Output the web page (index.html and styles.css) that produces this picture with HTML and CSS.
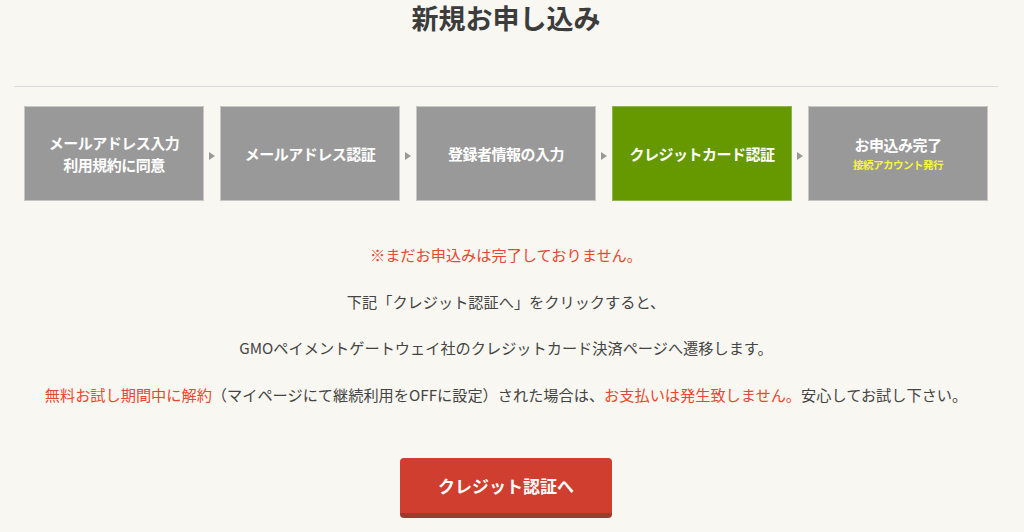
FILE: index.html
```html
<!DOCTYPE html>
<html lang="ja">
<head>
<meta charset="utf-8">
<title>新規お申し込み</title>
<link rel="stylesheet" href="styles.css">
</head>
<body>
<main class="page">
  <h1 class="title">新規お申し込み</h1>
  <div class="divider"></div>
  <ol class="steps">
    <li class="step">メールアドレス入力<br>利用規約に同意</li>
    <li class="arrow"></li>
    <li class="step">メールアドレス認証</li>
    <li class="arrow"></li>
    <li class="step">登録者情報の入力</li>
    <li class="arrow"></li>
    <li class="step current">クレジットカード認証</li>
    <li class="arrow"></li>
    <li class="step"><span>お申込み完了</span><span class="sub">接続アカウント発行</span></li>
  </ol>
  <div class="notes">
    <p class="red">※まだお申込みは完了しておりません。</p>
    <p>下記「クレジット認証へ」をクリックすると、</p>
    <p>GMOペイメントゲートウェイ社のクレジットカード決済ページへ遷移します。</p>
    <p><span class="red">無料お試し期間中に解約</span>（マイページにて継続利用をOFFに設定）された場合は、<span class="red">お支払いは発生致しません。</span>安心してお試し下さい。</p>
  </div>
  <div class="actions">
    <a class="btn" href="#">クレジット認証へ</a>
  </div>
</main>
</body>
</html>
```

FILE: styles.css
```css
html, body {
  margin: 0;
  padding: 0;
  background: #f8f7f1;
}
body {
  font-family: "Noto Sans CJK JP", "Noto Sans", sans-serif;
  color: #444;
}
.page {
  display: flex;
  flex-direction: column;
  padding: 0 26px 0 14px;
}
.title {
  margin: 0;
  padding-top: 2px;
  font-size: 27px;
  line-height: 32px;
  font-weight: bold;
  color: #3c3c3c;
  text-align: center;
}
.divider {
  margin-top: 52px;
  border-top: 1px solid #dcdcdc;
}
.steps {
  list-style: none;
  margin: 19px 0 0 0;
  padding: 0 0 0 10px;
  display: flex;
  align-items: center;
}
.step {
  box-sizing: border-box;
  width: 180px;
  height: 95px;
  background: #999;
  border: 1px solid #c6c6c6;
  color: #fff;
  font-weight: bold;
  font-size: 15px;
  line-height: 22px;
  letter-spacing: -0.5px;
  display: flex;
  flex-direction: column;
  align-items: center;
  justify-content: center;
  text-align: center;
}
.step.current {
  background: #669900;
  border-color: #8db550;
}
.step .sub {
  color: #f6f63a;
  font-size: 10.5px;
  line-height: 18px;
  letter-spacing: -0.5px;
}
.arrow {
  width: 16px;
  height: 95px;
  display: flex;
  align-items: center;
  justify-content: center;
}
.arrow::before {
  content: "";
  display: block;
  width: 0;
  height: 0;
  margin-top: 4px;
  border-top: 4.5px solid transparent;
  border-bottom: 4.5px solid transparent;
  border-left: 6px solid #999;
}
.notes {
  margin-top: 30px;
  text-align: center;
}
.notes p {
  margin: 0;
  font-size: 15.2px;
  line-height: 46.5px;
  white-space: nowrap;
}
.red {
  color: #e8472e;
}
.actions {
  margin-top: 41px;
  display: flex;
  justify-content: center;
}
.btn {
  box-sizing: border-box;
  display: flex;
  align-items: center;
  justify-content: center;
  width: 212px;
  height: 60px;
  background: #d03e2f;
  border-radius: 4px;
  border-bottom: 5px solid #9d3a2e;
  color: #fff;
  font-weight: bold;
  font-size: 17px;
  text-decoration: none;
}
```
